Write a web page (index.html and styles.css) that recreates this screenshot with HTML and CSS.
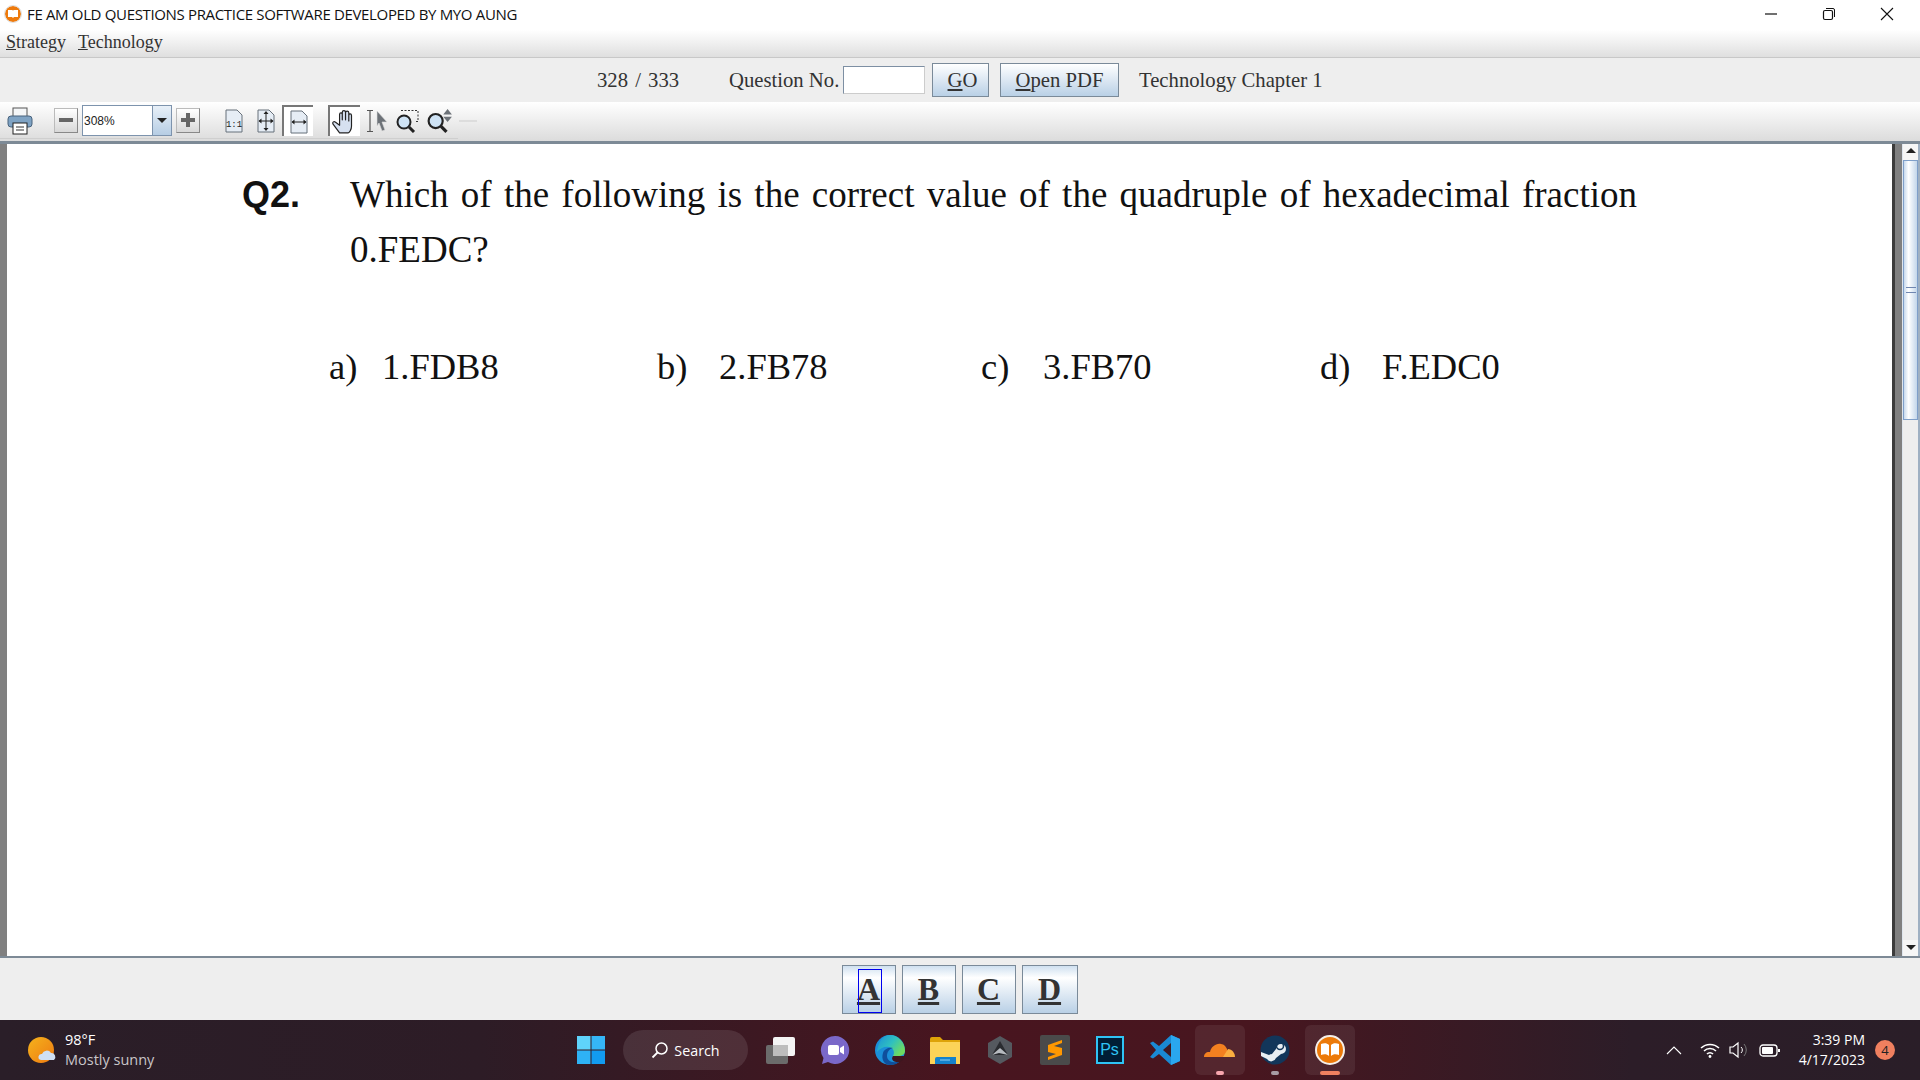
FILE: index.html
```html
<!DOCTYPE html>
<html lang="en">
<head>
  <meta charset="UTF-8">
  <meta name="viewport" content="width=device-width, initial-scale=1.0">
  <title>FE AM OLD QUESTIONS PRACTICE SOFTWARE</title>
  <link rel="stylesheet" href="styles.css">
</head>
<body>
  <div class="app">
    <header class="titlebar">
      <svg class="app-icon" viewBox="0 0 18 18"><circle cx="9" cy="9" r="8" fill="#ee7a0c"/><circle cx="9" cy="9" r="8.500" fill="none" stroke="#ddd"/><path d="M4 5h4.500l.5 1 .5-1H14v7H10l-1 1-1-1H4z" fill="#fff"/></svg>
      <span class="title-text">FE AM OLD QUESTIONS PRACTICE SOFTWARE DEVELOPED BY MYO AUNG</span>
      <div class="win-controls">
        <svg viewBox="0 0 14 14"><path d="M1 7h12" stroke="#111" stroke-width="1.200"/></svg>
        <svg viewBox="0 0 14 14"><rect x="1.500" y="3.500" width="9" height="9" rx="1.500" fill="none" stroke="#111" stroke-width="1.200"/><path d="M4 1.500h7a1.500 1.500 0 0 1 1.500 1.500v7" fill="none" stroke="#111"/></svg>
        <svg viewBox="0 0 14 14"><path d="M1 1l12 12M13 1L1 13" stroke="#111" stroke-width="1.100"/></svg>
      </div>
    </header>

    <nav class="menubar">
      <span><u>S</u>trategy</span>
      <span><u>T</u>echnology</span>
    </nav>

    <div class="jumpbar">
      <span class="counter">328 / 333</span>
      <label class="jump-label">Question No.</label>
      <input class="jump-input" type="text">
      <button class="btn btn-go"><u>G</u>O</button>
      <button class="btn btn-pdf"><u>O</u>pen PDF</button>
      <span class="chapter">Technology Chapter 1</span>
    </div>

    <div class="toolbar">
      <svg class="tool tool-print" viewBox="0 0 26 28">
        <rect x="6" y="1" width="14" height="9" fill="#f4f6f8" stroke="#555"/>
        <rect x="1" y="9" width="24" height="11" rx="3" fill="#7fa3c4" stroke="#48627c"/>
        <rect x="6" y="16" width="14" height="11" fill="#fff" stroke="#222"/>
        <path d="M9 20h8M9 23h8" stroke="#333"/>
      </svg>
      <div class="tool-btn tool-minus"><i></i></div>
      <div class="zoom-box">
        <span class="zoom-value">308%</span>
        <span class="zoom-arrow"></span>
      </div>
      <div class="tool-btn tool-plus"><i></i><b></b></div>
      <svg class="tool tool-actual" viewBox="0 0 18 24">
        <path d="M1 1h11l5 5v17H1z" fill="#e6edf5" stroke="#67707a"/>
        <text x="9" y="18" class="one-one">1:1</text>
      </svg>
      <svg class="tool tool-fit" viewBox="0 0 18 24">
        <path d="M1 1h11l5 5v17H1z" fill="#e6edf5" stroke="#67707a"/>
        <path d="M9 3v18M2 12h14" stroke="#222"/>
        <path d="M9 2l-2.500 3h5zM9 22l-2.500-3h5zM1.500 12l3-2.500v5zM16.500 12l-3-2.500v5z" fill="#222"/>
      </svg>
      <div class="tool-toggle tool-width">
        <svg viewBox="0 0 18 24">
          <path d="M1 1h11l5 5v17H1z" fill="#e6edf5" stroke="#67707a"/>
          <path d="M2 12h14" stroke="#222"/>
          <path d="M1.500 12l3-2.500v5zM16.500 12l-3-2.500v5z" fill="#222"/>
        </svg>
      </div>
      <div class="tool-toggle tool-hand">
        <svg viewBox="0 0 24 24">
          <path d="M7 22l-6-8c-1-2 1-3 2-2l4 3V5c0-2 2.500-2 2.500 0v5V3c0-2 3-2 3 0v7V3.500c0-2 3-2 3 0V11V6c0-2 2.500-2 2.500 0v10c0 3-2 6-3 6z" fill="#d6e0f0" stroke="#222" stroke-width="1.100" stroke-linejoin="round"/>
        </svg>
      </div>
      <svg class="tool tool-select" viewBox="0 0 24 24">
        <path d="M2 1.500h6M2 22.500h6M5 1.500v21" stroke="#555" stroke-width="1.200" fill="none"/>
        <path d="M12 2l10 11h-5l3 8-3 1-3-8-2 3z" fill="#6d7278" stroke="#ddd" stroke-width=".6"/>
      </svg>
      <svg class="tool tool-zoomrect" viewBox="0 0 24 24">
        <path d="M6 1.500h17v11h-3" fill="none" stroke="#333" stroke-dasharray="2 1.500"/>
        <circle cx="9" cy="13" r="6.500" fill="#cfe3f5" stroke="#222" stroke-width="2"/>
        <path d="M14 18l5 5" stroke="#222" stroke-width="3"/>
      </svg>
      <svg class="tool tool-zoomstep" viewBox="0 0 24 24">
        <circle cx="8" cy="12" r="6.500" fill="#cfe3f5" stroke="#222" stroke-width="2"/>
        <path d="M13 17l5 5" stroke="#222" stroke-width="3"/>
        <path d="M19 1l4 5h-8zM19 13l4-5h-8z" fill="#6d7278"/>
      </svg>
      <span class="tool-sep"></span>
    </div>

    <main class="viewer">
      <div class="page-edge"></div>
      <div class="page">
        <div class="question">
          <span class="q-num">Q2.</span>
          <div class="q-text">
            <span class="q-line first">Which of the following is the correct value of the quadruple of hexadecimal fraction</span>
            <span class="q-line">0.FEDC?</span>
          </div>
        </div>
        <div class="options">
          <div class="option opt-a"><span>a)</span><span>1.FDB8</span></div>
          <div class="option opt-b"><span>b)</span><span>2.FB78</span></div>
          <div class="option opt-c"><span>c)</span><span>3.FB70</span></div>
          <div class="option opt-d"><span>d)</span><span>F.EDC0</span></div>
        </div>
      </div>
      <div class="page-shadow"></div>
      <div class="scrollbar">
        <div class="arrow-btn"><i class="up"></i></div>
        <div class="thumb"><span></span></div>
        <div class="track"></div>
        <div class="arrow-btn"><i class="down"></i></div>
      </div>
    </main>

    <div class="answers">
      <button class="answer focus"><u>A</u></button>
      <button class="answer"><u>B</u></button>
      <button class="answer ans-c"><u>C</u></button>
      <button class="answer ans-d"><u>D</u></button>
    </div>
  </div>

  <footer class="taskbar">
    <div class="weather">
      <svg viewBox="0 0 30 28" width="30" height="28"><defs><linearGradient id="sun" x1="0" y1="0" x2="1" y2="1"><stop offset="0" stop-color="#f5b31c"/><stop offset="1" stop-color="#ee7a12"/></linearGradient></defs><circle cx="14" cy="14" r="13" fill="url(#sun)"/><path d="M14 24a3 3 0 0 1 1-6 5 5 0 0 1 9-1 4 4 0 0 1 3 7z" fill="#cfe0f5"/></svg>
      <div class="weather-text">
        <span class="temp">98°F</span>
        <span class="sky">Mostly sunny</span>
      </div>
    </div>

    <div class="task-icons">
      <div class="tile"><svg viewBox="0 0 30 30" width="30" height="30"><path d="M1 1h13.500v13.500H1z" fill="#5fd3fb"/><path d="M15.500 1H29v13.500H15.500z" fill="#35b6f7"/><path d="M1 15.500h13.500V29H1z" fill="#2eb2f5"/><path d="M15.500 15.500H29V29H15.500z" fill="#129bf0"/></svg></div>
      <div class="search-pill">
        <svg viewBox="0 0 18 18" width="18" height="18"><circle cx="10.500" cy="7.500" r="5.500" fill="none" stroke="#fff" stroke-width="1.500"/><path d="M6.500 11.500L1.500 16.500" stroke="#fff" stroke-width="1.800"/></svg>
        <span>Search</span>
      </div>
      <div class="tile"><svg viewBox="0 0 30 28" width="30" height="28"><rect x="1" y="9" width="22" height="19" rx="2" fill="#6b6b6b"/><rect x="8" y="1" width="22" height="19" rx="2" fill="#f4f4f4"/><rect x="8" y="9" width="15" height="11" fill="#bdbdbd"/></svg></div>
      <div class="tile"><svg viewBox="0 0 30 30" width="30" height="30"><path d="M15 1a14 14 0 1 1-7 26l-6 2 1.500-6A14 14 0 0 1 15 1z" fill="#7a68c9"/><rect x="8" y="10" width="11" height="10" rx="2" fill="#fff"/><path d="M20 13l4-2.500v9L20 17z" fill="#fff"/></svg></div>
      <div class="tile"><svg viewBox="0 0 30 30" width="30" height="30"><defs><linearGradient id="edgeTop" x1="0" y1="0" x2="1" y2=".6"><stop offset="0" stop-color="#1b8fd8"/><stop offset=".55" stop-color="#2fc0c0"/><stop offset="1" stop-color="#6fdc60"/></linearGradient></defs><circle cx="15" cy="15" r="15" fill="#1b8fd8"/><path d="M15 0c8 0 15 7 15 16 0 3-3 5-7 5h-5c2-3 1-8-4-9-4-1-9 1-12 5C3 7 8 0 15 0z" fill="url(#edgeTop)"/><path d="M12 21c0 5 6 8 13 5-3 3-6 4-10 4C9 30 6 24 8 18c1-4 6-6 10-5-4 1-6 4-6 8z" fill="#0f4f9c"/><path d="M18 21h12c-1 3-3 5-5 6-5 1-10-2-7-6z" fill="#3e1720"/></svg></div>
      <div class="tile"><svg viewBox="0 0 30 28" width="30" height="28"><path d="M0 3a2 2 0 0 1 2-2h8l3 3h17v4H0z" fill="#dea308"/><path d="M0 6h30v22H0z" fill="#fcd358"/><path d="M11 21h15v7H5v-5a2 2 0 0 1 2-2z" fill="#1482cc"/><path d="M10 24h10" stroke="#8fd0f5"/></svg></div>
      <div class="tile"><svg viewBox="0 0 26 28" width="26" height="28"><path d="M13 0l12 7v14l-12 7-12-7V7z" fill="#55595f"/><path d="M13 5l8 14H5z" fill="#2a2c30"/><path d="M5 19l8-7 8 7-9-2z" fill="#b6babf"/></svg></div>
      <div class="tile"><svg viewBox="0 0 30 30" width="30" height="30"><rect width="30" height="30" rx="2" fill="#4a4a4a"/><path d="M22 5L8 10v7l8 2-8 3v3l14-5v-7l-8-2 8-3z" fill="#ff9800"/></svg></div>
      <div class="tile"><div class="ps-icon">Ps</div></div>
      <div class="tile"><svg viewBox="0 0 30 30" width="30" height="30"><path d="M21 0l9 4v22l-9 4-12-11-6 4.500L0 22l6-7-6-7 3-1.500L9 11z" fill="#1a8ad4"/><path d="M21 0l9 4v22l-9 4z" fill="#2aa7ef"/><path d="M21 8l-8 7 8 7z" fill="#3e1a24"/></svg></div>
      <div class="tile active"><svg viewBox="0 0 32 16" width="32" height="16"><path d="M0 15c0-3 2-5 5-5h1c1-5 6-9 11-8 3 0 5 3 6 5l1 6-1 2z" fill="#f38020"/><path d="M24 7c4 0 7 4 7 8H19z" fill="#faae40"/></svg><span class="run-dot pink"></span></div>
      <div class="tile"><svg viewBox="0 0 30 30" width="30" height="30"><circle cx="15" cy="15" r="14.500" fill="#12365a"/><path d="M1 17l8 3a5 5 0 0 1 3-1l4-5a5 5 0 1 1 5 5l-5 4a5 5 0 0 1-9 1L1 21z" fill="#e8eef2"/><circle cx="20" cy="11" r="3.500" fill="none" stroke="#12365a" stroke-width="1.500"/></svg><span class="run-dot grey"></span></div>
      <div class="tile active current"><svg viewBox="0 0 30 30" width="30" height="30"><circle cx="15" cy="15" r="14" fill="#ec7a0a" stroke="#f5f0ea" stroke-width="2"/><path d="M6 9c3-1 6-1 8 1v11c-2-2-5-2-8-1zM24 9c-3-1-6-1-8 1v11c2-2 5-2 8-1z" fill="#fff"/></svg><span class="run-bar"></span></div>
    </div>

    <div class="tray">
      <svg viewBox="0 0 16 9" width="16" height="9"><path d="M1 8l7-7 7 7" fill="none" stroke="#fff" stroke-width="1.100"/></svg>
      <svg viewBox="0 0 20 15" width="20" height="15"><path d="M1 5a13 13 0 0 1 18 0M4 8a8.500 8.500 0 0 1 12 0M7 11a4 4 0 0 1 6 0" fill="none" stroke="#fff" stroke-width="1.500"/><circle cx="10" cy="13.500" r="1.400" fill="#fff"/></svg>
      <svg viewBox="0 0 20 18" width="20" height="18"><path d="M1 6h3l5-4v14l-5-4H1z" fill="none" stroke="#fff" stroke-width="1.200"/><path d="M12 6a4 4 0 0 1 0 6" fill="none" stroke="#fff"/><path d="M15 3a9 9 0 0 1 0 12" fill="none" stroke="#777"/></svg>
      <svg viewBox="0 0 21 13" width="21" height="13"><rect x="1" y="1" width="17" height="11" rx="3" fill="none" stroke="#fff" stroke-width="1.300"/><rect x="3" y="3" width="11" height="7" rx="1" fill="#fff"/><rect x="19" y="5" width="2" height="3" fill="#fff"/></svg>
      <div class="clock">
        <span>3:39 PM</span>
        <span>4/17/2023</span>
      </div>
      <span class="notify">4</span>
    </div>
  </footer>
</body>
</html>
```

FILE: styles.css
```css
* {
  box-sizing: border-box;
}
html, body {
  margin: 0;
  padding: 0;
  width: 1920px;
  height: 1080px;
  overflow: hidden;
}
body {
  font-family: "Liberation Serif", serif;
  background-color: #eeeeee;
  color: #333;
}
.app {
  height: 1020px;
  display: flex;
  flex-direction: column;
}

/* window title */
.titlebar {
  height: 30px;
  background-color: #fff;
  display: flex;
  align-items: center;
  padding: 0 0 2px 4px;
  flex-shrink: 0;
}
.app-icon {
  width: 18px;
  height: 18px;
  margin-right: 5px;
}
.title-text {
  font-family: "Open Sans", sans-serif;
  font-size: 15px;
  color: #111;
  letter-spacing: -0.34px;
  white-space: nowrap;
}
.win-controls {
  margin-left: auto;
  display: flex;
  gap: 44px;
  padding-right: 26px;
}
.win-controls svg {
  width: 14px;
  height: 14px;
}

/* menu */
.menubar {
  height: 28px;
  flex-shrink: 0;
  display: flex;
  align-items: center;
  gap: 12px;
  padding: 0 0 3px 6px;
  font-size: 18px;
  background: linear-gradient(#ffffff, #dfdfdf);
  border-bottom: 1px solid #c8c8c8;
}

/* question jump row */
.jumpbar {
  height: 44px;
  flex-shrink: 0;
  display: flex;
  align-items: center;
  font-size: 20.700px;
  padding-left: 597px;
}
.counter {
  width: 132px;
  word-spacing: 2px;
}
.jump-label {
  width: 114px;
}
.jump-input {
  width: 82px;
  height: 28px;
  background-color: #fff;
  border: 1px solid #7d8fa3;
  border-right-color: #ccc;
  border-bottom-color: #ccc;
  margin-right: 6px;
}
.btn {
  font-family: "Liberation Serif", serif;
  font-size: 20.700px;
  color: #333;
  height: 34px;
  padding: 0;
  border: 1px solid #7a8a99;
  background: linear-gradient(#ffffff, #b9d0e6);
}
.btn-go {
  width: 57px;
  padding-left: 4px;
  margin-right: 2px;
  margin-left: 1px;
}
.btn-pdf {
  width: 119px;
  margin-left: 9px;
}
.chapter {
  margin-left: 20px;
}

/* pdf toolbar */
.toolbar {
  height: 39px;
  flex-shrink: 0;
  position: relative;
  display: flex;
  align-items: center;
  padding-bottom: 2px;
  background: linear-gradient(#ffffff, #dcdcdc);
}
.toolbar::after {
  content: "";
  position: absolute;
  left: 0;
  bottom: 2px;
  width: 458px;
  height: 1px;
  background-color: #cfcfcf;
}
.tool {
  display: block;
  flex-shrink: 0;
}
.tool-print {
  width: 26px;
  height: 28px;
  margin-left: 7px;
}
.tool-btn {
  width: 24px;
  height: 25px;
  flex-shrink: 0;
  position: relative;
  border: 1px solid #bbb;
  border-right-color: #888;
  border-bottom-color: #888;
  background: linear-gradient(#ffffff, #d8d8d8);
}
.tool-btn i {
  position: absolute;
  left: 4px;
  right: 4px;
  top: 9px;
  height: 4px;
  background-color: #666;
}
.tool-btn b {
  position: absolute;
  top: 4px;
  bottom: 5px;
  left: 9px;
  width: 4px;
  background-color: #666;
}
.tool-minus {
  margin-left: 21px;
}
.zoom-box {
  width: 90px;
  height: 31px;
  margin-left: 4px;
  flex-shrink: 0;
  display: flex;
  border: 1px solid #7d93ad;
  background-color: #fff;
}
.zoom-value {
  flex: 1;
  font-family: "Liberation Sans", sans-serif;
  font-size: 12px;
  line-height: 30px;
  padding-left: 1px;
  color: #222;
}
.zoom-arrow {
  width: 19px;
  position: relative;
  border-left: 1px solid #7d93ad;
  background: linear-gradient(#e8f0f8, #b6cde4);
}
.zoom-arrow::after {
  content: "";
  position: absolute;
  left: 4px;
  top: 12px;
  border: 5px solid transparent;
  border-top: 5px solid #222;
}
.tool-plus {
  margin-left: 4px;
}
.tool-actual {
  width: 18px;
  height: 24px;
  margin-left: 25px;
}
.one-one {
  font-family: "Liberation Mono", monospace;
  font-size: 9px;
  text-anchor: middle;
  fill: #222;
}
.tool-fit {
  width: 18px;
  height: 24px;
  margin-left: 14px;
}
.tool-toggle {
  height: 31px;
  flex-shrink: 0;
  display: flex;
  align-items: center;
  justify-content: center;
  background-color: #fff;
  border-top: 2px solid #777;
  border-left: 2px solid #777;
}
.tool-toggle svg {
  width: 20px;
  height: 24px;
}
.tool-width {
  width: 31px;
  margin-left: 7px;
}
.tool-hand {
  width: 32px;
  margin-left: 15px;
}
.tool-hand svg {
  width: 26px;
  height: 26px;
}
.tool-select {
  width: 24px;
  height: 24px;
  margin-left: 5px;
}
.tool-zoomrect {
  width: 24px;
  height: 24px;
  margin-left: 6px;
}
.tool-zoomstep {
  width: 26px;
  height: 26px;
  margin-left: 8px;
}
.tool-sep {
  width: 18px;
  height: 2px;
  margin-left: 6px;
  background-color: #ddd;
}

/* document area */
.viewer {
  height: 817px;
  flex-shrink: 0;
  display: flex;
  border-top: 3px solid #7d8a96;
  border-bottom: 2px solid #7d8a96;
  background-color: #808080;
}
.page-edge {
  width: 7px;
  background-color: #808080;
}
.page {
  flex: 1;
  background-color: #fff;
  padding-top: 23px;
  color: #111;
}
.page-shadow {
  width: 10px;
  background-color: #808080;
  border-left: 3px solid #3c3c3c;
}
.question {
  display: flex;
  padding-left: 235px;
}
.q-num {
  font-family: "Liberation Sans", sans-serif;
  font-weight: bold;
  font-size: 36px;
  line-height: 40px;
  width: 108px;
  margin-top: 8px;
  flex-shrink: 0;
}
.q-text {
  width: 1287px;
  font-size: 37px;
  line-height: 55px;
}
.q-line {
  display: block;
}
.q-line.first {
  text-align: justify;
  text-align-last: justify;
}
.options {
  display: grid;
  grid-template-columns: 328px 324px 339px auto;
  padding-left: 322px;
  margin-top: 69px;
  font-size: 36.500px;
  line-height: 42px;
}
.option {
  display: flex;
}
.opt-a span:first-child {
  width: 53px;
}
.opt-b span:first-child,
.opt-c span:first-child,
.opt-d span:first-child {
  width: 62px;
}
.scrollbar {
  width: 18px;
  display: flex;
  flex-direction: column;
  background-color: #eeeeee;
  border-left: 1px solid #dfe6ee;
  border-right: 2px solid #9fb0c2;
}
.arrow-btn {
  height: 16px;
  flex-shrink: 0;
  position: relative;
  background-color: #f6f6f6;
}
.arrow-btn i {
  position: absolute;
  left: 3px;
  border: 5px solid transparent;
}
.arrow-btn .up {
  top: -1px;
  border-bottom: 5px solid #222;
}
.arrow-btn .down {
  top: 5px;
  border-top: 5px solid #222;
}
.thumb {
  height: 260px;
  flex-shrink: 0;
  display: flex;
  align-items: center;
  justify-content: center;
  border: 1px solid #7f9fc9;
  background: linear-gradient(90deg, #c8d9ec, #ffffff 35%, #c3d6ea);
}
.thumb span {
  width: 10px;
  height: 6px;
  border-top: 1px solid #6f86b0;
  border-bottom: 1px solid #6f86b0;
}
.track {
  flex: 1;
}

/* answer buttons */
.answers {
  flex: 1;
  display: flex;
  justify-content: center;
  gap: 6px;
  padding: 7px 0 0 0;
  margin-left: -1px;
}
.answer {
  width: 54px;
  height: 49px;
  padding: 0;
  font-family: "Liberation Serif", serif;
  font-weight: bold;
  font-size: 32px;
  color: #333;
  border: 1px solid #7a8a99;
  background: linear-gradient(#cfe0f0, #ffffff 25%, #b9d0e6);
  position: relative;
}
.ans-c {
  width: 54px;
}
.ans-d {
  width: 56px;
}
.answer.focus::after {
  content: "";
  position: absolute;
  left: 15px;
  top: 3px;
  width: 22px;
  height: 42px;
  border: 1px solid #0000ee;
}

/* windows taskbar */
.taskbar {
  height: 60px;
  display: flex;
  align-items: center;
  position: relative;
  background: linear-gradient(90deg, #2a1e28 0%, #2d1c26 25%, #48151f 50%, #48161f 65%, #2c1d28 85%, #2a1e28 100%);
  font-family: "Open Sans", sans-serif;
  color: #fff;
}
.weather {
  width: 563px;
  flex-shrink: 0;
  display: flex;
  align-items: center;
  padding-left: 27px;
  gap: 8px;
}
.weather-text {
  display: flex;
  flex-direction: column;
  font-size: 14.500px;
  line-height: 20px;
}
.sky {
  color: #c9c5c8;
}
.task-icons {
  display: flex;
  align-items: center;
}
.tile {
  width: 50px;
  height: 50px;
  margin: 0 2.500px;
  display: flex;
  align-items: center;
  justify-content: center;
  position: relative;
  border-radius: 6px;
}
.tile.active {
  background-color: rgba(255, 255, 255, 0.07);
}
.search-pill {
  width: 125px;
  height: 40px;
  margin: 0 4px 0 5px;
  display: flex;
  align-items: center;
  justify-content: center;
  gap: 5px;
  border-radius: 20px;
  background-color: rgba(255, 255, 255, 0.1);
  font-size: 14.300px;
}
.ps-icon {
  width: 28px;
  height: 28px;
  border: 2px solid #2fc4f5;
  background-color: #001e36;
  color: #2fc4f5;
  font-family: "Liberation Sans", sans-serif;
  font-size: 16px;
  line-height: 24px;
  text-align: center;
}
.run-dot {
  position: absolute;
  bottom: 0;
  left: 21px;
  width: 8px;
  height: 4px;
  border-radius: 2px;
}
.run-dot.pink {
  background-color: #f7a6ae;
}
.run-dot.grey {
  background-color: #a89ca4;
}
.run-bar {
  position: absolute;
  bottom: 0;
  left: 15px;
  width: 20px;
  height: 4px;
  border-radius: 2px;
  background-color: #f0805f;
}
.tray {
  margin-left: auto;
  display: flex;
  align-items: center;
  padding-right: 55px;
}
.tray svg {
  display: block;
}
.tray svg:nth-child(1) {
  margin-right: 18px;
}
.tray svg:nth-child(2) {
  margin-right: 9px;
}
.tray svg:nth-child(3) {
  margin-right: 10px;
}
.clock {
  display: flex;
  flex-direction: column;
  align-items: flex-end;
  font-size: 14px;
  line-height: 20px;
  margin-left: 19px;
}
.notify {
  position: absolute;
  right: 25px;
  top: 20px;
  width: 20px;
  height: 20px;
  border-radius: 50%;
  background-color: #f0805f;
  color: #222;
  font-size: 13px;
  line-height: 20px;
  text-align: center;
}
```
